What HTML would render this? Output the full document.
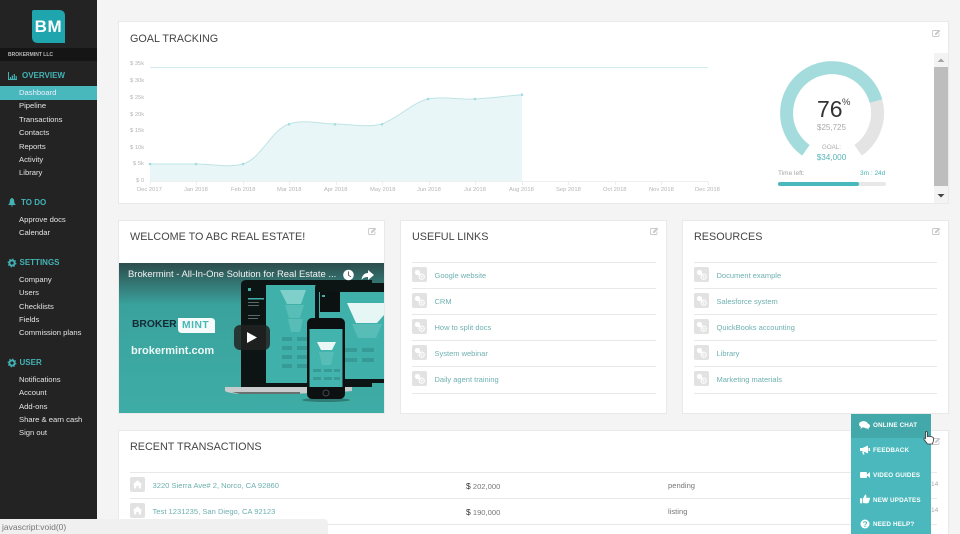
<!DOCTYPE html>
<html lang="en"><head><meta charset="utf-8"><title>Brokermint</title>
<style>
html,body{margin:0;padding:0;width:960px;height:534px;overflow:hidden}
body{background:#f4f4f4;font-family:"Liberation Sans",sans-serif}
#w{position:absolute;left:0;top:0;width:960px;height:534px;overflow:hidden;background:#f4f4f4}
.t{position:absolute;white-space:nowrap;line-height:12px}
.side{position:absolute;left:0;top:0;width:97px;height:534px;background:#232323}
.n{left:19px;font-size:7.65px;color:#e4e4e4}
.h{font-size:8px;font-weight:bold;color:#43b3b6}
.card{position:absolute;background:#fff;box-shadow:0 0 0 1px #e9e9e9}
.title{font-size:10.8px;color:#454545;left:130px}
.l{position:absolute;height:1px;background:#e8e8e8}
.lk{font-size:7.5px;color:#6fb0b0}
.ax{font-size:5.8px;color:#b5b5b5}
.hp{font-size:6.3px;font-weight:bold;color:#fff;left:873px;letter-spacing:.15px}
svg{position:absolute;overflow:visible}
</style></head><body><div id="w">

<div class="side"></div>
<svg style="left:32px;top:10px" width="33" height="33"><path d="M2 0H27Q33 0 33 6V33H6Q0 33 0 27V2Q0 0 2 0Z" fill="#1fa5ae"/></svg>
<div class="t" style="left:32px;top:21px;width:33px;text-align:center;font-size:17px;font-weight:bold;color:#fff;letter-spacing:.6px">BM</div>
<div style="position:absolute;left:0;top:48px;width:97px;height:13px;background:#151515"></div>
<div class="t" style="left:8px;top:49px;font-size:5px;font-weight:bold;color:#b8b8b8">BROKERMINT LLC</div>

<svg style="left:8px;top:72px" width="9" height="8" fill="none" stroke="#43b3b6"><path d="M.5 0V7.500H9" stroke-width="1"/><path d="M2.500 7V5M4.400 7V3.500M6.300 7V2M8.200 7V4" stroke-width="1.200"/></svg>
<div class="t h" style="left:22px;top:70px">OVERVIEW</div>
<div style="position:absolute;left:0;top:86px;width:97px;height:13.5px;background:#49b8bc"></div>
<div class="t n" style="top:87px;color:#eef">Dashboard</div>
<div class="t n" style="top:100px">Pipeline</div>
<div class="t n" style="top:113.500px">Transactions</div>
<div class="t n" style="top:127px">Contacts</div>
<div class="t n" style="top:140.500px">Reports</div>
<div class="t n" style="top:154px">Activity</div>
<div class="t n" style="top:167px">Library</div>

<svg style="left:8px;top:198px" width="8" height="9" fill="#43b3b6"><path d="M4 0C5.800 .5 6.200 2 6.300 4 6.400 5.500 7 6.200 8 7H0C1 6.200 1.600 5.500 1.700 4 1.800 2 2.200 .5 4 0Z"/><path d="M3 7.500H5L4 9Z"/></svg>
<div class="t h" style="left:21px;top:197px">TO DO</div>
<div class="t n" style="top:214px">Approve docs</div>
<div class="t n" style="top:227px">Calendar</div>

<svg style="left:8px;top:259px" width="8" height="8"><circle cx="4" cy="4" r="2.600" fill="none" stroke="#43b3b6" stroke-width="1.900"/><circle cx="4" cy="4" r="3.900" fill="none" stroke="#43b3b6" stroke-width="1" stroke-dasharray="1.500 1.560"/></svg>
<div class="t h" style="left:19.500px;top:257px">SETTINGS</div>
<div class="t n" style="top:274px">Company</div>
<div class="t n" style="top:287px">Users</div>
<div class="t n" style="top:300.500px">Checklists</div>
<div class="t n" style="top:314px">Fields</div>
<div class="t n" style="top:327px">Commission plans</div>

<svg style="left:8px;top:359px" width="8" height="8"><circle cx="4" cy="4" r="2.600" fill="none" stroke="#43b3b6" stroke-width="1.900"/><circle cx="4" cy="4" r="3.900" fill="none" stroke="#43b3b6" stroke-width="1" stroke-dasharray="1.500 1.560"/></svg>
<div class="t h" style="left:19.500px;top:357px">USER</div>
<div class="t n" style="top:374px">Notifications</div>
<div class="t n" style="top:387px">Account</div>
<div class="t n" style="top:400.500px">Add-ons</div>
<div class="t n" style="top:414px">Share &amp; earn cash</div>
<div class="t n" style="top:427px">Sign out</div>

<!-- Goal tracking -->
<div class="card" style="left:119px;top:22px;width:829px;height:181px"></div>
<div class="t title" style="top:32.500px">GOAL TRACKING</div>
<svg style="left:0;top:0" width="960" height="534">
<path d="M150 181.500H708M150.500 181.500V185M196.500 181.500V185M243.500 181.500V185M289.500 181.500V185M336.500 181.500V185M382.500 181.500V185M429.500 181.500V185M475.500 181.500V185M522.500 181.500V185M568.500 181.500V185M615.500 181.500V185M661.500 181.500V185M708.500 181.500V185" stroke="#eee" fill="none"/>
<path d="M150 67.500H708" stroke="#d3eced" fill="none"/>
<path d="M150 181V164C165 164 181 164 196 164C212 164 228 168 243 164C262 158 271 130 289 124C305 119 320 124 335 124C351 124 366 128 382 124C398 118 412 103 428 99C444 96 459 100 475 99C491 98 506 96 522 94.700V181Z" fill="#e9f6f7"/>
<path d="M150 164C165 164 181 164 196 164C212 164 228 168 243 164C262 158 271 130 289 124C305 119 320 124 335 124C351 124 366 128 382 124C398 118 412 103 428 99C444 96 459 100 475 99C491 98 506 96 522 94.700" fill="none" stroke="#bfe4e5"/>
<g fill="#a3dcde"><circle cx="150" cy="164" r="1.300"/><circle cx="196" cy="164" r="1.300"/><circle cx="243" cy="164" r="1.300"/><circle cx="289" cy="124.300" r="1.300"/><circle cx="335" cy="124.300" r="1.300"/><circle cx="382" cy="124.300" r="1.300"/><circle cx="428" cy="99" r="1.300"/><circle cx="475" cy="99" r="1.300"/><circle cx="522" cy="94.700" r="1.300"/></g>
<path d="M805.900 150.300A45.500 45.500 0 1 1 876 101.200" fill="none" stroke="#a4dcdd" stroke-width="13"/>
<path d="M876 101.200A45.500 45.500 0 0 1 858.100 150.300" fill="none" stroke="#e4e4e4" stroke-width="13"/>
</svg>
<div class="t ax" style="left:130px;top:58px">$ 35k</div>
<div class="t ax" style="left:130px;top:74.500px">$ 30k</div>
<div class="t ax" style="left:130px;top:91.500px">$ 25k</div>
<div class="t ax" style="left:130px;top:108.500px">$ 20k</div>
<div class="t ax" style="left:130px;top:125px">$ 15k</div>
<div class="t ax" style="left:130px;top:141.500px">$ 10k</div>
<div class="t ax" style="left:133px;top:158px">$ 5k</div>
<div class="t ax" style="left:136px;top:175px">$ 0</div>
<div class="t ax" style="left:137px;top:183.500px">Dec 2017</div>
<div class="t ax" style="left:184px;top:183.500px">Jan 2018</div>
<div class="t ax" style="left:231px;top:183.500px">Feb 2018</div>
<div class="t ax" style="left:277px;top:183.500px">Mar 2018</div>
<div class="t ax" style="left:324px;top:183.500px">Apr 2018</div>
<div class="t ax" style="left:370px;top:183.500px">May 2018</div>
<div class="t ax" style="left:417px;top:183.500px">Jun 2018</div>
<div class="t ax" style="left:464px;top:183.500px">Jul 2018</div>
<div class="t ax" style="left:509px;top:183.500px">Aug 2018</div>
<div class="t ax" style="left:556px;top:183.500px">Sep 2018</div>
<div class="t ax" style="left:603px;top:183.500px">Oct 2018</div>
<div class="t ax" style="left:649px;top:183.500px">Nov 2018</div>
<div class="t ax" style="left:695px;top:183.500px">Dec 2018</div>

<div class="t" style="left:817px;top:97px;font-size:23px;line-height:24px;color:#333">76</div>
<div class="t" style="left:842px;top:97px;font-size:9.500px;color:#444">%</div>
<div class="t" style="left:792px;top:121.500px;width:79px;text-align:center;font-size:8px;color:#aaa">$25,725</div>
<div class="t" style="left:792px;top:142px;width:79px;text-align:center;font-size:6.200px;color:#aaa">GOAL:</div>
<div class="t" style="left:792px;top:152px;width:79px;text-align:center;font-size:8.200px;color:#58b5b8">$34,000</div>
<div class="t" style="left:778px;top:168px;font-size:6.500px;color:#a5a5a5">Time left:</div>
<div class="t" style="left:860px;top:168px;font-size:6.500px;color:#4bb3b6">3m : 24d</div>
<div style="position:absolute;left:778px;top:182px;width:108px;height:4px;background:#e8e8e8;border-radius:2px"></div>
<div style="position:absolute;left:778px;top:182px;width:81px;height:4px;background:#4ab8bc;border-radius:2px"></div>
<div style="position:absolute;left:934px;top:53px;width:14px;height:150px;background:#f3f3f3"></div>
<div style="position:absolute;left:934px;top:67px;width:14px;height:119px;background:#bdbdbd"></div>
<svg style="left:934px;top:53px" width="14" height="150"><path d="M3.500 9L7 5.500 10.500 9Z" fill="#a5a5a5"/><path d="M3.500 141L7 144.500 10.500 141Z" fill="#444"/></svg>

<!-- Welcome -->
<div class="card" style="left:119px;top:221px;width:265px;height:192px"></div>
<div class="t title" style="top:231px">WELCOME TO ABC REAL ESTATE!</div>
<svg style="left:119px;top:263px" width="265" height="150" viewBox="119 263 265 150">
<defs><linearGradient id="g" x1="0" y1="0" x2="0" y2="1"><stop offset="0" stop-color="#2d4c4c"/><stop offset=".28" stop-color="#3aa29c"/><stop offset="1" stop-color="#3eada6"/></linearGradient></defs>
<rect x="119" y="263" width="265" height="150" fill="url(#g)"/>
<path d="M178 318H211Q215 318 215 322V333H182Q178 333 178 329Z" fill="#f4fbfa"/>
<!-- laptop -->
<path d="M246 280H372V387H241V285Q241 280 246 280Z" fill="#0d1414"/>
<rect x="266" y="285" width="92" height="98" fill="#3fb0aa"/>
<path d="M280 290H306L301 304H287Z" fill="#7fcfca"/><path d="M285 305H304L300 318H289Z" fill="#58bdb7"/><path d="M288 319H303L300 332H291Z" fill="#58bdb7"/>
<g fill="#369a95"><rect x="282" y="337" width="10" height="4"/><rect x="297" y="337" width="10" height="4"/><rect x="282" y="346" width="10" height="4"/><rect x="297" y="346" width="10" height="4"/><rect x="282" y="355" width="10" height="4"/><rect x="297" y="355" width="10" height="4"/><rect x="282" y="364" width="10" height="4"/><rect x="297" y="364" width="10" height="4"/></g>
<rect x="248" y="298" width="16" height="1.500" fill="#3fb0aa"/><rect x="248" y="302" width="11" height="1" fill="#5a6a6a"/><rect x="248" y="305" width="11" height="1" fill="#5a6a6a"/><rect x="248" y="315" width="12" height="1" fill="#5a6a6a"/><rect x="248" y="318" width="10" height="1" fill="#5a6a6a"/>
<rect x="248" y="288" width="3" height="3" fill="#3fb0aa"/>
<path d="M225 387H352V391Q320 394 240 394 228 393 225 391Z" fill="#c9cccc"/><path d="M232 392H300V394H240Z" fill="#687070"/>
<!-- tablet -->
<path d="M320 283H384V383H315V288Q315 283 320 283Z" fill="#0d1414"/>
<rect x="319" y="292" width="65" height="87" fill="#3fb0aa"/>
<rect x="320" y="292" width="20" height="20" fill="#0c1111"/><rect x="322" y="295" width="3" height="2" fill="#3fb0aa"/>
<path d="M347 303H384V315L377 323H356Z" fill="#e6f6f4"/><path d="M352 324H382L376 338H358Z" fill="#58bdb7"/>
<g fill="#369a95"><rect x="345" y="348" width="12" height="4"/><rect x="362" y="348" width="12" height="4"/><rect x="345" y="358" width="12" height="4"/><rect x="362" y="358" width="12" height="4"/></g>
<!-- phone -->
<ellipse cx="326" cy="400" rx="24" ry="2" fill="#2a6663" opacity=".7"/>
<rect x="307" y="318" width="38" height="81" rx="5" fill="#0c1010"/>
<rect x="309.500" y="329" width="33" height="58" fill="#43b3ad"/>
<path d="M317 342H336L332 350H321Z" fill="#eaf7f5"/><path d="M319 352H334L331 365H322Z" fill="#58bdb7"/>
<g fill="#369a95"><rect x="313" y="369" width="8" height="3"/><rect x="324" y="369" width="8" height="3"/><rect x="334" y="369" width="6" height="3"/><rect x="313" y="377" width="8" height="3"/><rect x="324" y="377" width="8" height="3"/><rect x="334" y="377" width="6" height="3"/></g>
<circle cx="326" cy="393" r="3" fill="none" stroke="#445"/>
<!-- play -->
<rect x="234" y="325" width="36" height="25" rx="6" fill="#222" fill-opacity=".85"/>
<path d="M247 332L257 337.500 247 343Z" fill="#fff"/>
<circle cx="348.500" cy="275" r="5.300" fill="#fff"/><path d="M348.500 271.500V275.300L351 276.800" fill="none" stroke="#444" stroke-width=".8"/>
<path d="M368 270L374 275 368 280V277C365 277 363 278 361.500 280 362 276 364 273 368 273Z" fill="#fff"/>
</svg>
<div class="t" style="left:128px;top:268.500px;font-size:9.450px;color:#f2f2f2">Brokermint - All-In-One Solution for Real Estate ...</div>
<div class="t" style="left:132px;top:319px;font-size:10.300px;font-weight:bold;color:#132a36">BROKER</div>
<div class="t" style="left:182px;top:319.500px;font-size:10.300px;font-weight:bold;color:#49b8b4;letter-spacing:.5px">MINT</div>
<div class="t" style="left:131px;top:345px;font-size:11px;font-weight:bold;color:#eef8f7">brokermint.com</div>

<!-- Links -->
<div class="card" style="left:401px;top:221px;width:265px;height:192px"></div>
<div class="t title" style="left:412px;top:231px">USEFUL LINKS</div>
<div class="card" style="left:683px;top:221px;width:265px;height:192px"></div>
<div class="t title" style="left:694px;top:231px">RESOURCES</div>

<div class="l" style="left:412px;width:244px;top:262px"></div><div class="l" style="left:412px;width:244px;top:288px"></div><div class="l" style="left:412px;width:244px;top:314px"></div><div class="l" style="left:412px;width:244px;top:340px"></div><div class="l" style="left:412px;width:244px;top:366px"></div><div class="l" style="left:412px;width:244px;top:392.500px"></div>
<div class="l" style="left:694px;width:243px;top:262px"></div><div class="l" style="left:694px;width:243px;top:288px"></div><div class="l" style="left:694px;width:243px;top:314px"></div><div class="l" style="left:694px;width:243px;top:340px"></div><div class="l" style="left:694px;width:243px;top:366px"></div><div class="l" style="left:694px;width:243px;top:392.500px"></div>

<svg width="0" height="0"><defs><g id="lnk"><rect width="15" height="15" rx="2" fill="#e2e2e2"/><circle cx="5.500" cy="5.500" r="2.600" fill="#fff"/><circle cx="9.700" cy="9.700" r="2.600" fill="none" stroke="#fff" stroke-width="1.100"/><path d="M7 7L8.500 8.500" stroke="#fff" stroke-width="1.400"/><path d="M8.500 9.700H11M9.700 8.500V11" stroke="#fff" stroke-width=".7"/></g>
<g id="ed"><path d="M6.500 1.500H1.500Q.5 1.500 .5 2.500V6.500Q.5 7.500 1.500 7.500H6Q7 7.500 7 6.500V4.500" fill="none" stroke="#c9c9c9" stroke-width=".9"/><path d="M3 4.500L7 .8 8.300 2 4.300 6H3Z" fill="#c9c9c9"/></g>
<g id="hm"><rect width="15" height="15" rx="2" fill="#e2e2e2"/><path d="M7.500 3.300L12.200 7.500H11V11.500H8.700V9H6.300V11.500H4V7.500H2.800Z" fill="#fff"/></g></defs></svg>

<svg style="left:412px;top:267px" width="15" height="15"><use href="#lnk"/></svg>
<svg style="left:412px;top:293px" width="15" height="15"><use href="#lnk"/></svg>
<svg style="left:412px;top:319px" width="15" height="15"><use href="#lnk"/></svg>
<svg style="left:412px;top:345px" width="15" height="15"><use href="#lnk"/></svg>
<svg style="left:412px;top:371px" width="15" height="15"><use href="#lnk"/></svg>
<svg style="left:694px;top:267px" width="15" height="15"><use href="#lnk"/></svg>
<svg style="left:694px;top:293px" width="15" height="15"><use href="#lnk"/></svg>
<svg style="left:694px;top:319px" width="15" height="15"><use href="#lnk"/></svg>
<svg style="left:694px;top:345px" width="15" height="15"><use href="#lnk"/></svg>
<svg style="left:694px;top:371px" width="15" height="15"><use href="#lnk"/></svg>

<div class="t lk" style="left:434.500px;top:269.500px">Google website</div>
<div class="t lk" style="left:434.500px;top:295.500px">CRM</div>
<div class="t lk" style="left:434.500px;top:321.500px">How to split docs</div>
<div class="t lk" style="left:434.500px;top:347.500px">System webinar</div>
<div class="t lk" style="left:434.500px;top:373.500px">Daily agent training</div>
<div class="t lk" style="left:716.500px;top:269.500px">Document example</div>
<div class="t lk" style="left:716.500px;top:295.500px">Salesforce system</div>
<div class="t lk" style="left:716.500px;top:321.500px">QuickBooks accounting</div>
<div class="t lk" style="left:716.500px;top:347.500px">Library</div>
<div class="t lk" style="left:716.500px;top:373.500px">Marketing materials</div>

<svg style="left:932px;top:29px" width="9" height="8"><use href="#ed"/></svg>
<svg style="left:368px;top:227px" width="9" height="8"><use href="#ed"/></svg>
<svg style="left:650px;top:227px" width="9" height="8"><use href="#ed"/></svg>
<svg style="left:932px;top:227px" width="9" height="8"><use href="#ed"/></svg>

<!-- Recent -->
<div class="card" style="left:119px;top:431px;width:829px;height:110px"></div>
<div class="t title" style="top:441px">RECENT TRANSACTIONS</div>
<div class="l" style="left:130px;width:807px;top:472px"></div>
<div class="l" style="left:130px;width:807px;top:498px"></div>
<div class="l" style="left:130px;width:807px;top:524px"></div>
<svg style="left:130px;top:477px" width="15" height="15"><use href="#hm"/></svg>
<svg style="left:130px;top:503px" width="15" height="15"><use href="#hm"/></svg>
<div class="t lk" style="left:152.500px;top:479.500px;font-size:7.600px">3220 Sierra Ave# 2, Norco, CA 92860</div>
<div class="t lk" style="left:152.500px;top:505.500px;font-size:7.600px">Test 1231235, San Diego, CA 92123</div>
<div class="t" style="left:466px;top:479.500px;font-size:7.600px;color:#777"><span style="color:#333;font-size:8.500px">$</span> 202,000</div>
<div class="t" style="left:466px;top:505.500px;font-size:7.600px;color:#777"><span style="color:#333;font-size:8.500px">$</span> 190,000</div>
<div class="t" style="left:466px;top:531.500px;font-size:7.600px;color:#777"><span style="color:#333;font-size:8.500px">$</span></div>
<div class="t" style="left:668px;top:479.500px;font-size:7.600px;color:#777">pending</div>
<div class="t" style="left:668px;top:505.500px;font-size:7.600px;color:#777">listing</div>
<div class="t" style="left:931px;top:479px;font-size:6.500px;color:#aaa">14</div>
<div class="t" style="left:931px;top:505px;font-size:6.500px;color:#aaa">14</div>
<svg style="left:932px;top:437px" width="9" height="8"><use href="#ed"/></svg>

<!-- Widget -->
<div style="position:absolute;left:851px;top:414px;width:80px;height:120px;background:#4ab8bc"></div>
<div style="position:absolute;left:851px;top:414px;width:80px;height:24px;background:#43a8aa"></div>
<svg style="left:859px;top:421px" width="11" height="9" fill="#fff"><ellipse cx="4.500" cy="3.300" rx="4.500" ry="3.200"/><path d="M2 5.500L1.500 8 4 6Z"/><ellipse cx="7.800" cy="5" rx="3.200" ry="2.500"/><path d="M9 6.500L10 8.700 7.500 7Z"/></svg>
<svg style="left:860px;top:445px" width="10" height="10" fill="#fff"><path d="M0 3H2.500L8 .5V8.500L2.500 6H0Z"/><path d="M2 6.500H3.800L4.500 9.500H3Z"/><rect x="8.500" y="3" width="1.500" height="3"/></svg>
<svg style="left:860px;top:471px" width="10" height="8" fill="#fff"><rect y="1" width="7" height="6" rx="1"/><path d="M7 3.500L10 1V7L7 4.500Z"/></svg>
<svg style="left:860px;top:494px" width="10" height="10" fill="#fff"><rect y="4.300" width="2.300" height="5"/><path d="M3 4.500L5.200 .5C6.300 .5 6.500 1.500 6.200 3.800H9.300C10.200 3.800 10 5 9.600 5.500 9.800 6.500 9.300 7 9 7.300 9 8.300 8.500 9.300 7.500 9.300H4.500L3 8.800Z"/></svg>
<svg style="left:859.500px;top:519px" width="10" height="10"><circle cx="5" cy="5" r="4.500" fill="#fff"/><path d="M3.400 3.800C3.500 2.300 6.700 2.300 6.700 4 6.700 5 5 5 5 6.200" fill="none" stroke="#4ab8bc" stroke-width="1"/><rect x="4.400" y="6.800" width="1.200" height="1.200" fill="#4ab8bc"/></svg>
<div class="t hp" style="top:420px">ONLINE CHAT</div>
<div class="t hp" style="top:445px">FEEDBACK</div>
<div class="t hp" style="top:470px">VIDEO GUIDES</div>
<div class="t hp" style="top:494.500px">NEW UPDATES</div>
<div class="t hp" style="top:518.500px">NEED HELP?</div>
<svg style="left:923px;top:431px" width="12" height="14"><path d="M2.500 1.500C2.500 .2 4.300 .2 4.300 1.500V5.500L6 5.200 8 5.500 9.800 6.200C10.800 6.700 10.800 8 10.500 9.500L9.500 13H4.500L1 8.500C.5 7.500 1.500 6.500 2.500 7.500Z" fill="#fff" stroke="#333" stroke-width=".8"/></svg>

<!-- Status bar -->
<div style="position:absolute;left:0;top:519px;width:328px;height:15px;background:#f0f0f0;border-top-right-radius:4px"></div>
<div class="t" style="left:2px;top:521px;font-size:8.500px;color:#777">javascript:void(0)</div>
</div></body></html>
